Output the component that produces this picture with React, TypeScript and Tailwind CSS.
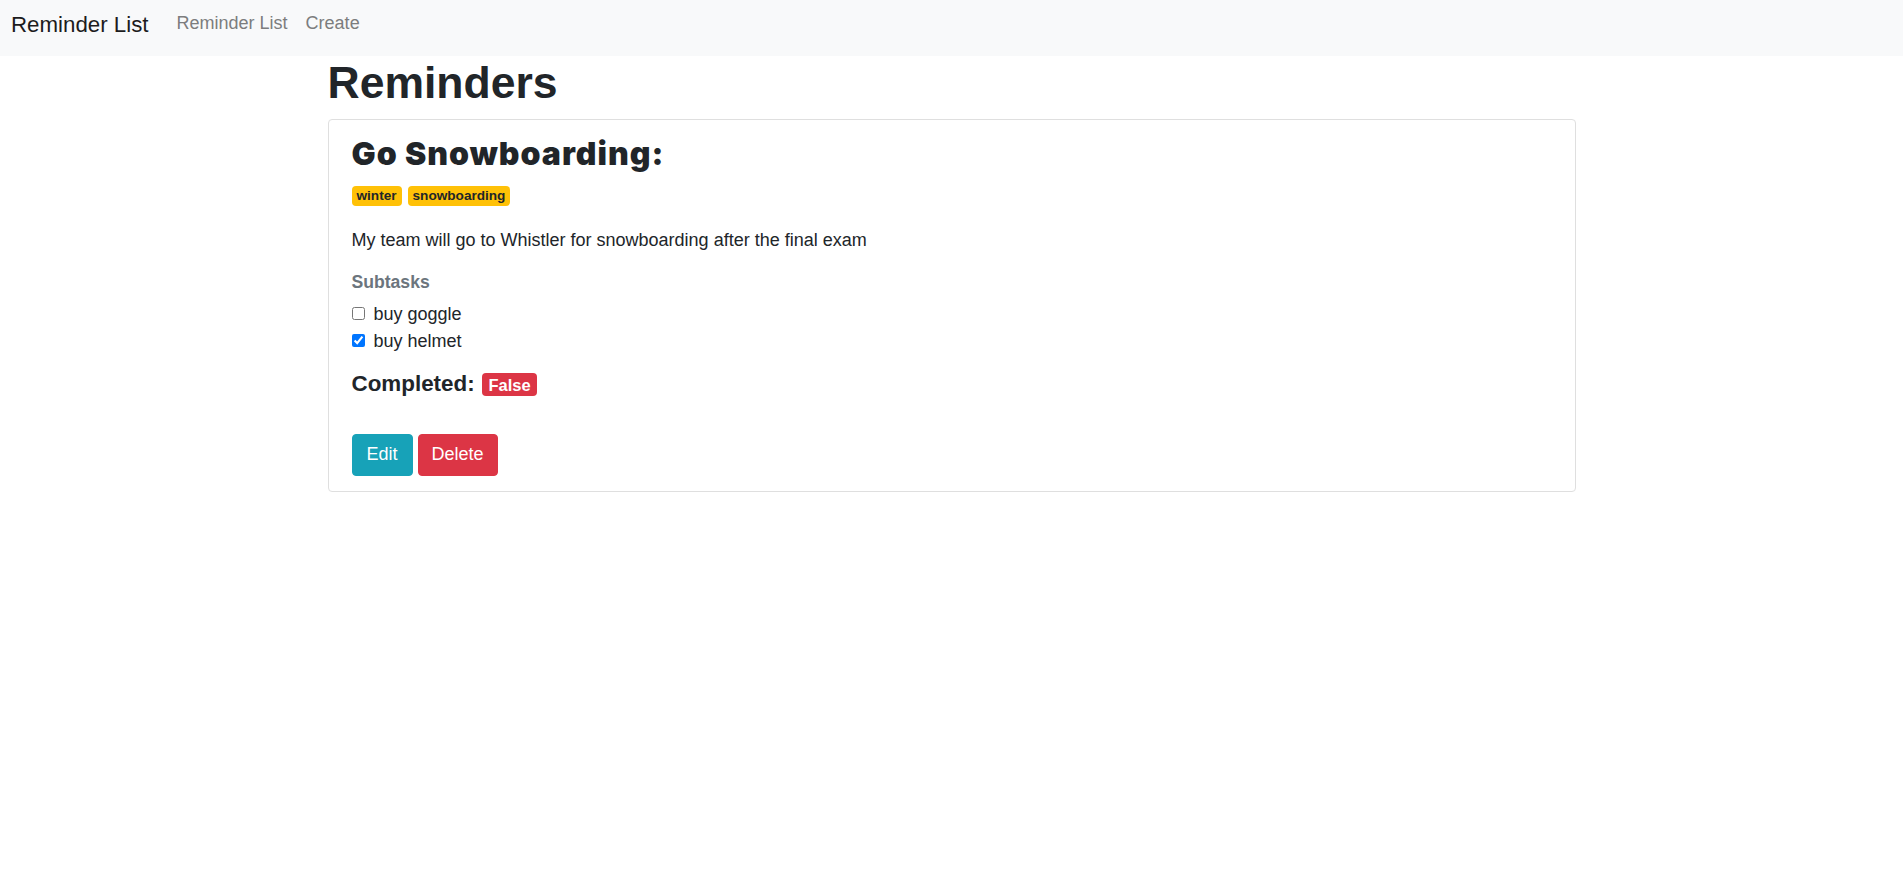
import React from "react";

type Subtask = { name: string; done: boolean };

const reminder = {
  title: "Go Snowboarding:",
  tags: ["winter", "snowboarding"],
  description: "My team will go to Whistler for snowboarding after the final exam",
  subtasks: [
    { name: "buy goggle", done: false },
    { name: "buy helmet", done: true },
  ] as Subtask[],
  completed: false,
};

function Navbar() {
  return (
    <nav className="flex h-[56px] items-start bg-[#f8f9fa] pl-[11px]">
      <a className="mt-[8px] text-[22.3px] leading-[33px] text-[#1c1c1d]">Reminder List</a>
      <div className="ml-[19px] mt-[10px] flex">
        <a className="px-[9px] text-[18px] leading-[27px] text-[#7c7d7e]">Reminder List</a>
        <a className="px-[9px] text-[18px] leading-[27px] text-[#7c7d7e]">Create</a>
      </div>
    </nav>
  );
}

function ReminderCard() {
  return (
    <div className="mt-[10px] rounded-[4px] border border-[#dfdfdf] bg-white px-[23px] pb-[15px] pt-[17px]">
      <h2 className="font-['Inter',sans-serif] text-[32px] font-black leading-[34px] tracking-[1px]">
        {reminder.title}
      </h2>

      <div className="mt-[15px] flex gap-[6px]">
        {reminder.tags.map((t) => (
          <span
            key={t}
            className="inline-block rounded-[4px] bg-[#ffc107] px-[5px] py-[3px] text-[13.6px] font-bold leading-[14px] text-[#212529]"
          >
            {t}
          </span>
        ))}
      </div>

      <p className="mt-[21px] text-[18px] leading-[27px]">{reminder.description}</p>

      <h6 className="mt-[17.5px] text-[17.6px] font-bold leading-[21px] text-[#6c757d]">Subtasks</h6>

      <div className="mt-[8px]">
        {reminder.subtasks.map((s) => (
          <label key={s.name} className="flex h-[27px] items-center gap-[9px] text-[18px] leading-[27px]">
            <input type="checkbox" defaultChecked={s.done} className="m-0 -mt-[1px] h-[13px] w-[13px]" />
            <span>{s.name}</span>
          </label>
        ))}
      </div>

      <h5 className="mt-[16px] text-[22.4px] font-bold leading-[26.4px]">
        Completed:{" "}
        <span className="ml-[1px] inline-block rounded-[4px] bg-[#dc3545] px-[6.6px] py-[3.3px] text-[16.5px] leading-none text-white">
          {reminder.completed ? "True" : "False"}
        </span>
      </h5>

      <div className="mt-[37px] flex gap-[5px]">
        <button className="h-[42px] rounded-[4px] border border-[#17a2b8] bg-[#17a2b8] px-[14px] text-[18px] text-white">
          Edit
        </button>
        <button className="h-[42px] rounded-[4px] border border-[#dc3545] bg-[#dc3545] px-[13px] text-[18px] text-white">
          Delete
        </button>
      </div>
    </div>
  );
}

export default function App() {
  return (
    <div className="min-h-[890px] bg-white font-['Liberation_Sans',Arial,sans-serif] text-[#212529]">
      <Navbar />
      <main className="mx-auto w-[1248px]">
        <h1 className="text-[44.5px] font-bold leading-[53px]">Reminders</h1>
        <ReminderCard />
      </main>
    </div>
  );
}
